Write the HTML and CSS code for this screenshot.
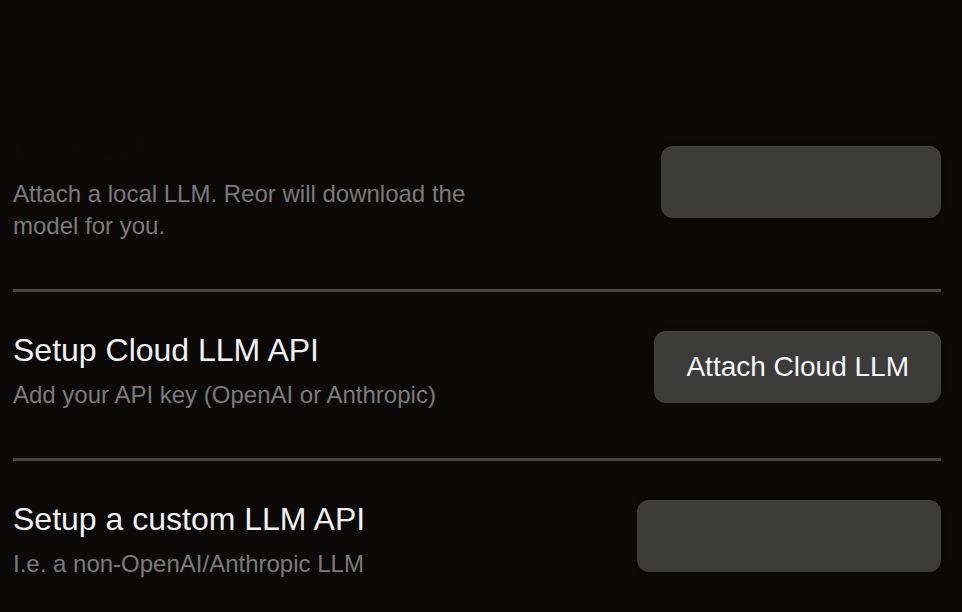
FILE: index.html
```html
<!DOCTYPE html>
<html lang="en">
<head>
    <meta charset="UTF-8">
    <meta name="viewport" content="width=device-width, initial-scale=1.0">
    <title>LLM Setup</title>
    <link rel="stylesheet" href="styles.css">
</head>
<body>
    <div class="container">
        <!-- Local model (still fading in) -->
        <div class="option fading">
            <div class="option-text">
                <h4>Local LLM</h4>
                <p>Attach a local LLM. Reor will download the model for you.</p>
            </div>
            <button>Attach Local LLM</button>
        </div>

        <div class="option">
            <div class="option-text">
                <h4>Setup Cloud LLM API</h4>
                <p>Add your API key (OpenAI or Anthropic)</p>
            </div>
            <button>Attach Cloud LLM</button>
        </div>

        <div class="option fading-button">
            <div class="option-text">
                <h4>Setup a custom LLM API</h4>
                <p>I.e. a non-OpenAI/Anthropic LLM</p>
            </div>
            <button>Setup Custom LLM</button>
        </div>
    </div>
</body>
</html>
```

FILE: styles.css
```css
html, body {
    margin: 0;
    padding: 0;
    background-color: #0b0a09;
}
body {
    font-family: "Liberation Sans", Arial, sans-serif;
    color: #f2f2f2;
}
.container {
    width: 928px;
    margin-left: 13px;
    padding-top: 91px;
}
.option {
    display: flex;
    justify-content: space-between;
    align-items: center;
    gap: 20px;
    padding: 34px 0 47px;
    border-bottom: 3px solid #444443;
}
.option:last-child {
    border-bottom: none;
}
.option-text {
    max-width: 480px;
}
.option-text h4 {
    margin: 0;
    font-size: 32px;
    line-height: 48px;
    font-weight: normal;
    color: #f2f2f2;
}
.option-text p {
    margin: 5px 0 0;
    font-size: 24px;
    line-height: 32px;
    color: #7a7a7a;
}
button {
    font-family: inherit;
    font-size: 28px;
    line-height: 40px;
    padding: 16px 32px;
    margin-bottom: 4px;
    background-color: #3c3c3b;
    color: #f5f5f5;
    border: none;
    border-radius: 12px;
    cursor: pointer;
    white-space: nowrap;
    box-shadow: 0 0 4px rgba(0, 0, 0, 0.7), inset 0 1px 0 rgba(255, 255, 255, 0.05);
}
.fading h4 {
    color: #0c0b0a;
}
.fading button,
.fading-button button {
    color: #3d3d3c;
}
```
